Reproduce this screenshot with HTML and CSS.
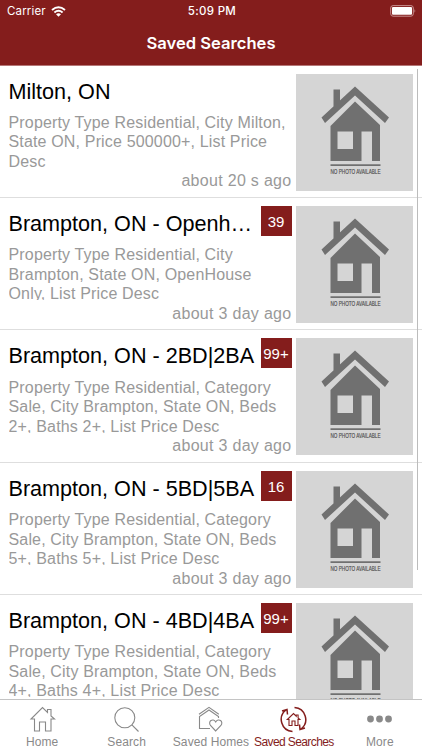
FILE: index.html
```html
<!DOCTYPE html>
<html lang="en">
<head>
<meta charset="utf-8">
<title>Saved Searches</title>
<link rel="stylesheet" href="styles.css">
</head>
<body>
<svg class="defs" aria-hidden="true">
  <symbol id="house" viewBox="-0.500 0 117 117">
    <path fill="#707070" d="M25 43.500L58.500 12.500 92.500 43.500 88.500 49 58.500 21.500 28.500 49ZM37 15.500h6.500v15L37 36.500ZM34 52L58.500 27.500 83.500 51v36H75.500V57.500H65V87H34Z"/>
    <path fill="#d5d5d5" d="M41 57.500h15.500V75H41Z"/>
    <path fill="#707070" d="M34 90.300h50v1.700H34Z"/>
    <text x="34" y="99.500" textLength="50" lengthAdjust="spacingAndGlyphs" class="nophoto">NO PHOTO AVAILABLE</text>
  </symbol>
</svg>
<div class="app">
  <header class="header">
    <div class="status">
      <div class="carrier"><span class="carrier-name">Carrier</span>
        <svg width="15" height="11" viewBox="0 0 15 11"><g fill="none" stroke="#fff" stroke-width="1.900"><path d="M1 4Q7.500-1.500 14 4M3.400 6.500Q7.500 3 11.600 6.500"/></g><path fill="#fff" d="M5 8.300Q7.500 6.300 10 8.300L7.500 10.800Z"/></svg>
      </div>
      <div class="clock">5:09 PM</div>
      <svg class="battery" width="27" height="12" viewBox="0 0 27 12"><rect x=".7" y=".6" width="22.600" height="10.600" rx="2.400" fill="none" stroke="#c99090"/><rect x="2" y="2" width="20" height="7.800" rx="1" fill="#fff"/><path d="M24.500 4q1.800 1.900 0 3.800z" fill="#c99090"/></svg>
    </div>
    <h1 class="heading">Saved Searches</h1>
  </header>
  <main class="list">
    <article class="row">
      <div class="info">
        <div class="top"><h2 class="title">Milton, ON</h2></div>
        <p class="desc">Property Type Residential, City Milton,<br>State ON, Price 500000+, List Price<br>Desc</p>
        <div class="time">about 20 s ago</div>
      </div>
      <svg class="photo"><use href="#house"/></svg>
    </article>
    <article class="row">
      <div class="info">
        <div class="top"><h2 class="title">Brampton, ON - Openh…</h2><span class="badge">39</span></div>
        <p class="desc">Property Type Residential, City<br>Brampton, State ON, OpenHouse<br>Only, List Price Desc</p>
        <div class="time">about 3 day ago</div>
      </div>
      <svg class="photo"><use href="#house"/></svg>
    </article>
    <article class="row">
      <div class="info">
        <div class="top"><h2 class="title">Brampton, ON - 2BD|2BA</h2><span class="badge">99+</span></div>
        <p class="desc">Property Type Residential, Category<br>Sale, City Brampton, State ON, Beds<br>2+, Baths 2+, List Price Desc</p>
        <div class="time">about 3 day ago</div>
      </div>
      <svg class="photo"><use href="#house"/></svg>
    </article>
    <article class="row">
      <div class="info">
        <div class="top"><h2 class="title">Brampton, ON - 5BD|5BA</h2><span class="badge">16</span></div>
        <p class="desc">Property Type Residential, Category<br>Sale, City Brampton, State ON, Beds<br>5+, Baths 5+, List Price Desc</p>
        <div class="time">about 3 day ago</div>
      </div>
      <svg class="photo"><use href="#house"/></svg>
    </article>
    <article class="row">
      <div class="info">
        <div class="top"><h2 class="title">Brampton, ON - 4BD|4BA</h2><span class="badge">99+</span></div>
        <p class="desc">Property Type Residential, Category<br>Sale, City Brampton, State ON, Beds<br>4+, Baths 4+, List Price Desc</p>
        <div class="time">about 3 day ago</div>
      </div>
      <svg class="photo"><use href="#house"/></svg>
    </article>
    <div class="scrollbar"></div>
  </main>
  <nav class="tabs">
    <div class="tab"><svg class="icon" viewBox="0 0 27 27"><path d="M5.500 13H2L13.500 1.500l5 5V3.500H22v6.500l3.500 3H22V25H16.500V16H10.500v9h-5Z"/></svg><span>Home</span></div>
    <div class="tab"><svg class="icon" viewBox="0 0 27 27"><circle cx="11.800" cy="11.800" r="10"/><path d="M18.900 18.900L25.500 25.500"/></svg><span>Search</span></div>
    <div class="tab"><svg class="icon" viewBox="0 0 27 27"><path d="M13 22.500H2.500V10.500L12 4l9.500 6.500V12M2 8.300L12 1.300l9.800 7M18.700 25L13.500 19.500C10.500 15.500 16 11.500 18.700 16 21.500 11.500 27 15.500 23.900 19.500Z"/></svg><span>Saved Homes</span></div>
    <div class="tab active"><svg class="icon" viewBox="0 0 27 27"><path d="M9 13.500H7.300L13.500 7.500l2.700 2.700V9h1.900v3l1.700 1.500H18V19.500h-3V15h-3v4.500H9Z"/><path stroke-width="1.500" d="M12.500 25.500A12 12 0 0 1 6 4M2 5l5-1.500.5 5M14.500 1.500A12 12 0 0 1 21 23M25 22l-5 1.500-.5-5"/></svg><span>Saved Searches</span></div>
    <div class="tab"><svg class="icon dots" viewBox="0 0 27 27"><circle cx="4.500" cy="13" r="3.400"/><circle cx="13.500" cy="13" r="3.400"/><circle cx="22.500" cy="13" r="3.400"/></svg><span>More</span></div>
  </nav>
</div>
</body>
</html>
```
FILE: styles.css
```css
* { box-sizing: border-box; }
body { margin: 0; font-family: "Liberation Sans", Arial, sans-serif; background: #fff; }
.defs { display: none; }
.app { width: 422px; height: 750px; overflow: hidden; display: flex; flex-direction: column; }
.header { height: 66px; flex: none; background: #841d1c; color: #fff; border-bottom: 1px solid #b57676; font-family: Inter, sans-serif; }
.status { height: 22px; display: grid; grid-template-columns: 1fr 60px 1fr; align-items: center; padding: 0 5px 0 7px; font-size: 11.500px; }
.carrier { display: flex; align-items: center; gap: 5px; }
.carrier-name { letter-spacing: .15px; }
.clock { text-align: center; font-weight: 500; white-space: nowrap; letter-spacing: .3px; }
.battery { justify-self: end; }
.heading { margin: 0; height: 43px; line-height: 43px; text-align: center; font-size: 16.600px; font-weight: 600; }
.list { position: relative; flex: 1; min-height: 0; overflow: hidden; }
.row { height: 132.400px; border-bottom: 1px solid #dedede; display: flex; gap: 4.900px; padding: 8px 8px 0 8.500px; }
.row:first-child { height: 132px; padding-top: 7.600px; }
.info { width: 283px; flex: none; }
.top { height: 39.300px; display: flex; justify-content: space-between; }
.title { margin: 0; padding-top: 5px; font-size: 21.600px; line-height: 26px; font-weight: 400; white-space: nowrap; color: #000; }
.badge { width: 31px; height: 30px; flex: none; background: #841d1c; color: #fff; font-size: 15px; line-height: 31px; text-align: center; }
.desc { margin: 0 0 4.700px; height: 55px; overflow: hidden; color: #999; font-size: 16px; line-height: 19.500px; letter-spacing: .16px; white-space: nowrap; }
.row:first-child .desc { height: 59.500px; margin: 0; }
.time { color: #999; font-size: 16px; line-height: 18px; letter-spacing: .3px; text-align: right; white-space: nowrap; }
.photo { width: 117px; height: 117px; flex: none; background: #d5d5d5; }
.nophoto { font: 6.800px "Liberation Sans", sans-serif; fill: #4c4c4c; stroke: #4c4c4c; stroke-width: .15px; }
.scrollbar { position: absolute; right: 4.500px; top: 3px; width: 1px; height: 501px; background: #bcbcbc; }
.tabs { height: 51px; flex: none; display: grid; grid-template-columns: repeat(5, minmax(0, 1fr)); border-top: 1px solid #c4c4c4; background: #fff; }
.tab { display: flex; flex-direction: column; align-items: center; padding-top: 6px; color: #898989; font-size: 12px; line-height: 14px; letter-spacing: .1px; white-space: nowrap; gap: 2px; }
.tab.active { color: #841d1c; letter-spacing: -.6px; padding-right: 3px; }
.icon { width: 27px; height: 27px; flex: none; fill: none; stroke: currentColor; stroke-width: 1.100; }
.dots { fill: currentColor; stroke: none; }
```
